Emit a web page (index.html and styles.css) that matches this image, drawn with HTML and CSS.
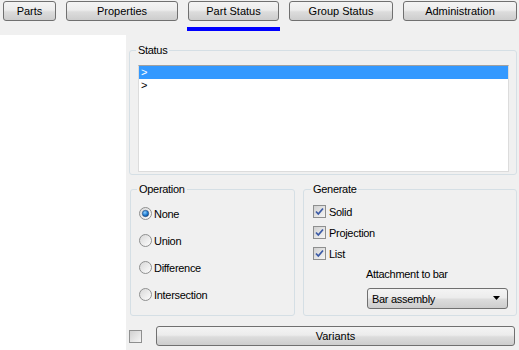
FILE: index.html
```html
<!DOCTYPE html>
<html lang="en">
<head>
  <meta charset="UTF-8">
  <title>Part Status</title>
  <link rel="stylesheet" href="styles.css">
</head>
<body>
  <div class="tabs">
    <div class="tab-slot"><button class="btn tab w-parts">Parts</button></div>
    <div class="tab-slot"><button class="btn tab w-props">Properties</button></div>
    <div class="tab-slot active"><button class="btn tab w-status">Part Status</button><span class="tab-line"></span></div>
    <div class="tab-slot"><button class="btn tab w-group">Group Status</button></div>
    <div class="tab-slot"><button class="btn tab w-admin">Administration</button></div>
  </div>

  <div class="main">
    <div class="side"></div>

    <div class="content">
      <fieldset class="group status">
        <legend>Status</legend>
        <div class="listbox">
          <div class="list-row selected">&gt;</div>
          <div class="list-row">&gt;</div>
        </div>
      </fieldset>

      <div class="group-row">
        <fieldset class="group operation">
          <legend>Operation</legend>
          <label class="opt">
            <svg class="radio" width="13" height="13" viewBox="0 0 13 13">
              <defs>
                <linearGradient id="rg1" x1="0" y1="0" x2="1" y2="1">
                  <stop offset="0" stop-color="#d6d6d6"/>
                  <stop offset="1" stop-color="#ffffff"/>
                </linearGradient>
                <radialGradient id="dot" cx="0.4" cy="0.35" r="0.7">
                  <stop offset="0" stop-color="#8fd0ff"/>
                  <stop offset="0.6" stop-color="#1c7ad0"/>
                  <stop offset="1" stop-color="#0c4a8c"/>
                </radialGradient>
              </defs>
              <circle cx="6.5" cy="6.5" r="6" fill="url(#rg1)" stroke="#8e8f8f"/>
              <circle cx="6.5" cy="6.5" r="3.2" fill="url(#dot)" stroke="#2b4a78" stroke-width="0.6"/>
            </svg>
            None
          </label>
          <label class="opt">
            <svg class="radio" width="13" height="13" viewBox="0 0 13 13">
              <circle cx="6.5" cy="6.5" r="6" fill="url(#rg1)" stroke="#8e8f8f"/>
            </svg>
            Union
          </label>
          <label class="opt">
            <svg class="radio" width="13" height="13" viewBox="0 0 13 13">
              <circle cx="6.5" cy="6.5" r="6" fill="url(#rg1)" stroke="#8e8f8f"/>
            </svg>
            Difference
          </label>
          <label class="opt">
            <svg class="radio" width="13" height="13" viewBox="0 0 13 13">
              <circle cx="6.5" cy="6.5" r="6" fill="url(#rg1)" stroke="#8e8f8f"/>
            </svg>
            Intersection
          </label>
        </fieldset>

        <fieldset class="group generate">
          <legend>Generate</legend>
          <label class="check">
            <svg class="cbox" width="13" height="13" viewBox="0 0 13 13">
              <defs>
                <linearGradient id="cg" x1="0" y1="0" x2="1" y2="1">
                  <stop offset="0" stop-color="#cfcfcf"/>
                  <stop offset="1" stop-color="#f7f7f7"/>
                </linearGradient>
              </defs>
              <rect x="0.5" y="0.5" width="12" height="12" fill="url(#cg)" stroke="#8e8f8f"/>
              <path d="M3 6.5 L5.3 9 L10 3.5" fill="none" stroke="#3b5aa6" stroke-width="1.7"/>
            </svg>
            Solid
          </label>
          <label class="check">
            <svg class="cbox" width="13" height="13" viewBox="0 0 13 13">
              <rect x="0.5" y="0.5" width="12" height="12" fill="url(#cg)" stroke="#8e8f8f"/>
              <path d="M3 6.5 L5.3 9 L10 3.5" fill="none" stroke="#3b5aa6" stroke-width="1.7"/>
            </svg>
            Projection
          </label>
          <label class="check">
            <svg class="cbox" width="13" height="13" viewBox="0 0 13 13">
              <rect x="0.5" y="0.5" width="12" height="12" fill="url(#cg)" stroke="#8e8f8f"/>
              <path d="M3 6.5 L5.3 9 L10 3.5" fill="none" stroke="#3b5aa6" stroke-width="1.7"/>
            </svg>
            List
          </label>
          <div class="attach-label">Attachment to bar</div>
          <div class="btn combo">
            <span>Bar assembly</span>
            <svg width="8" height="5" viewBox="0 0 8 5"><path d="M0 0 H7 L3.5 4 Z" fill="#000"/></svg>
          </div>
        </fieldset>
      </div>

      <div class="bottom-row">
        <svg class="cbox" width="13" height="13" viewBox="0 0 13 13">
          <rect x="0.5" y="0.5" width="12" height="12" fill="url(#cg)" stroke="#8e8f8f"/>
        </svg>
        <button class="btn variants">Variants</button>
      </div>
    </div>
  </div>
</body>
</html>
```

FILE: styles.css
```css
body {
  margin: 0;
  background: #f0f0f0;
  font-family: "Liberation Sans", Arial, sans-serif;
  font-size: 11px;
  letter-spacing: -0.3px;
  color: #000;
  width: 519px;
  height: 350px;
  overflow: hidden;
}

.btn {
  box-sizing: border-box;
  border: 1px solid #707070;
  border-radius: 3px;
  background: linear-gradient(#f4f4f4 0%, #ececec 45%, #dcdcdc 55%, #cdcdcd 100%);
  font: inherit;
  color: #000;
  padding: 0;
}

/* top tab buttons */
.tabs {
  display: flex;
  gap: 10px;
  padding-left: 3px;
  height: 35px;
}

.tab-slot {
  display: flex;
  flex-direction: column;
  padding-top: 1px;
}

.tab {
  height: 20px;
}

.tab-line {
  display: block;
  height: 4px;
  margin: 6px -1px 0 -1px;
  background: #0000ff;
}

.w-parts { width: 53px; }
.w-props { width: 112px; }
.w-status { width: 91px; }
.w-group { width: 104px; }
.w-admin { width: 114px; }

/* main area */
.main {
  display: flex;
  height: 315px;
}

.side {
  width: 126px;
  background: #fff;
}

.content {
  flex: 1;
  padding: 9px 2px 0 3px;
  display: flex;
  flex-direction: column;
}

.group {
  margin: 0;
  min-width: 0;
  border: 1px solid #d5dfe5;
  border-radius: 3px;
  box-sizing: border-box;
}

.group legend {
  padding: 0 2px;
  margin-left: -2px;
  line-height: 13px;
}

.status {
  padding: 8px 7px 2px 8px;
}

.listbox {
  height: 107px;
  box-sizing: border-box;
  background: #fff;
  border: 1px solid #dcdcdc;
  border-top-color: #a0a0a0;
}

.list-row {
  height: 13px;
  line-height: 13px;
  padding-left: 2px;
}

.list-row.selected {
  background: #3399ff;
  color: #fff;
}

.group-row {
  display: flex;
  gap: 8px;
  margin-top: 8px;
  padding-left: 1px;
  height: 133px;
}

.operation {
  width: 165px;
  padding: 4px 4px 0 8px;
}

.generate {
  flex: 1;
  padding: 5px 8px 0 9px;
}

.opt {
  display: flex;
  align-items: center;
  gap: 2px;
  height: 27px;
}

.radio, .cbox {
  flex: none;
  display: block;
}

.check {
  display: flex;
  align-items: center;
  gap: 3px;
  height: 21px;
}

.attach-label {
  margin: 4px 0 0 53px;
  line-height: 13px;
}

.combo {
  display: flex;
  align-items: center;
  justify-content: space-between;
  width: 141px;
  height: 21px;
  margin: 7px 0 0 54px;
  padding: 0 6px 0 4px;
}

.bottom-row {
  display: flex;
  align-items: center;
  margin-top: 10px;
  padding-right: 2px;
}

.variants {
  flex: 1;
  height: 20px;
  margin-left: 14px;
}
```
